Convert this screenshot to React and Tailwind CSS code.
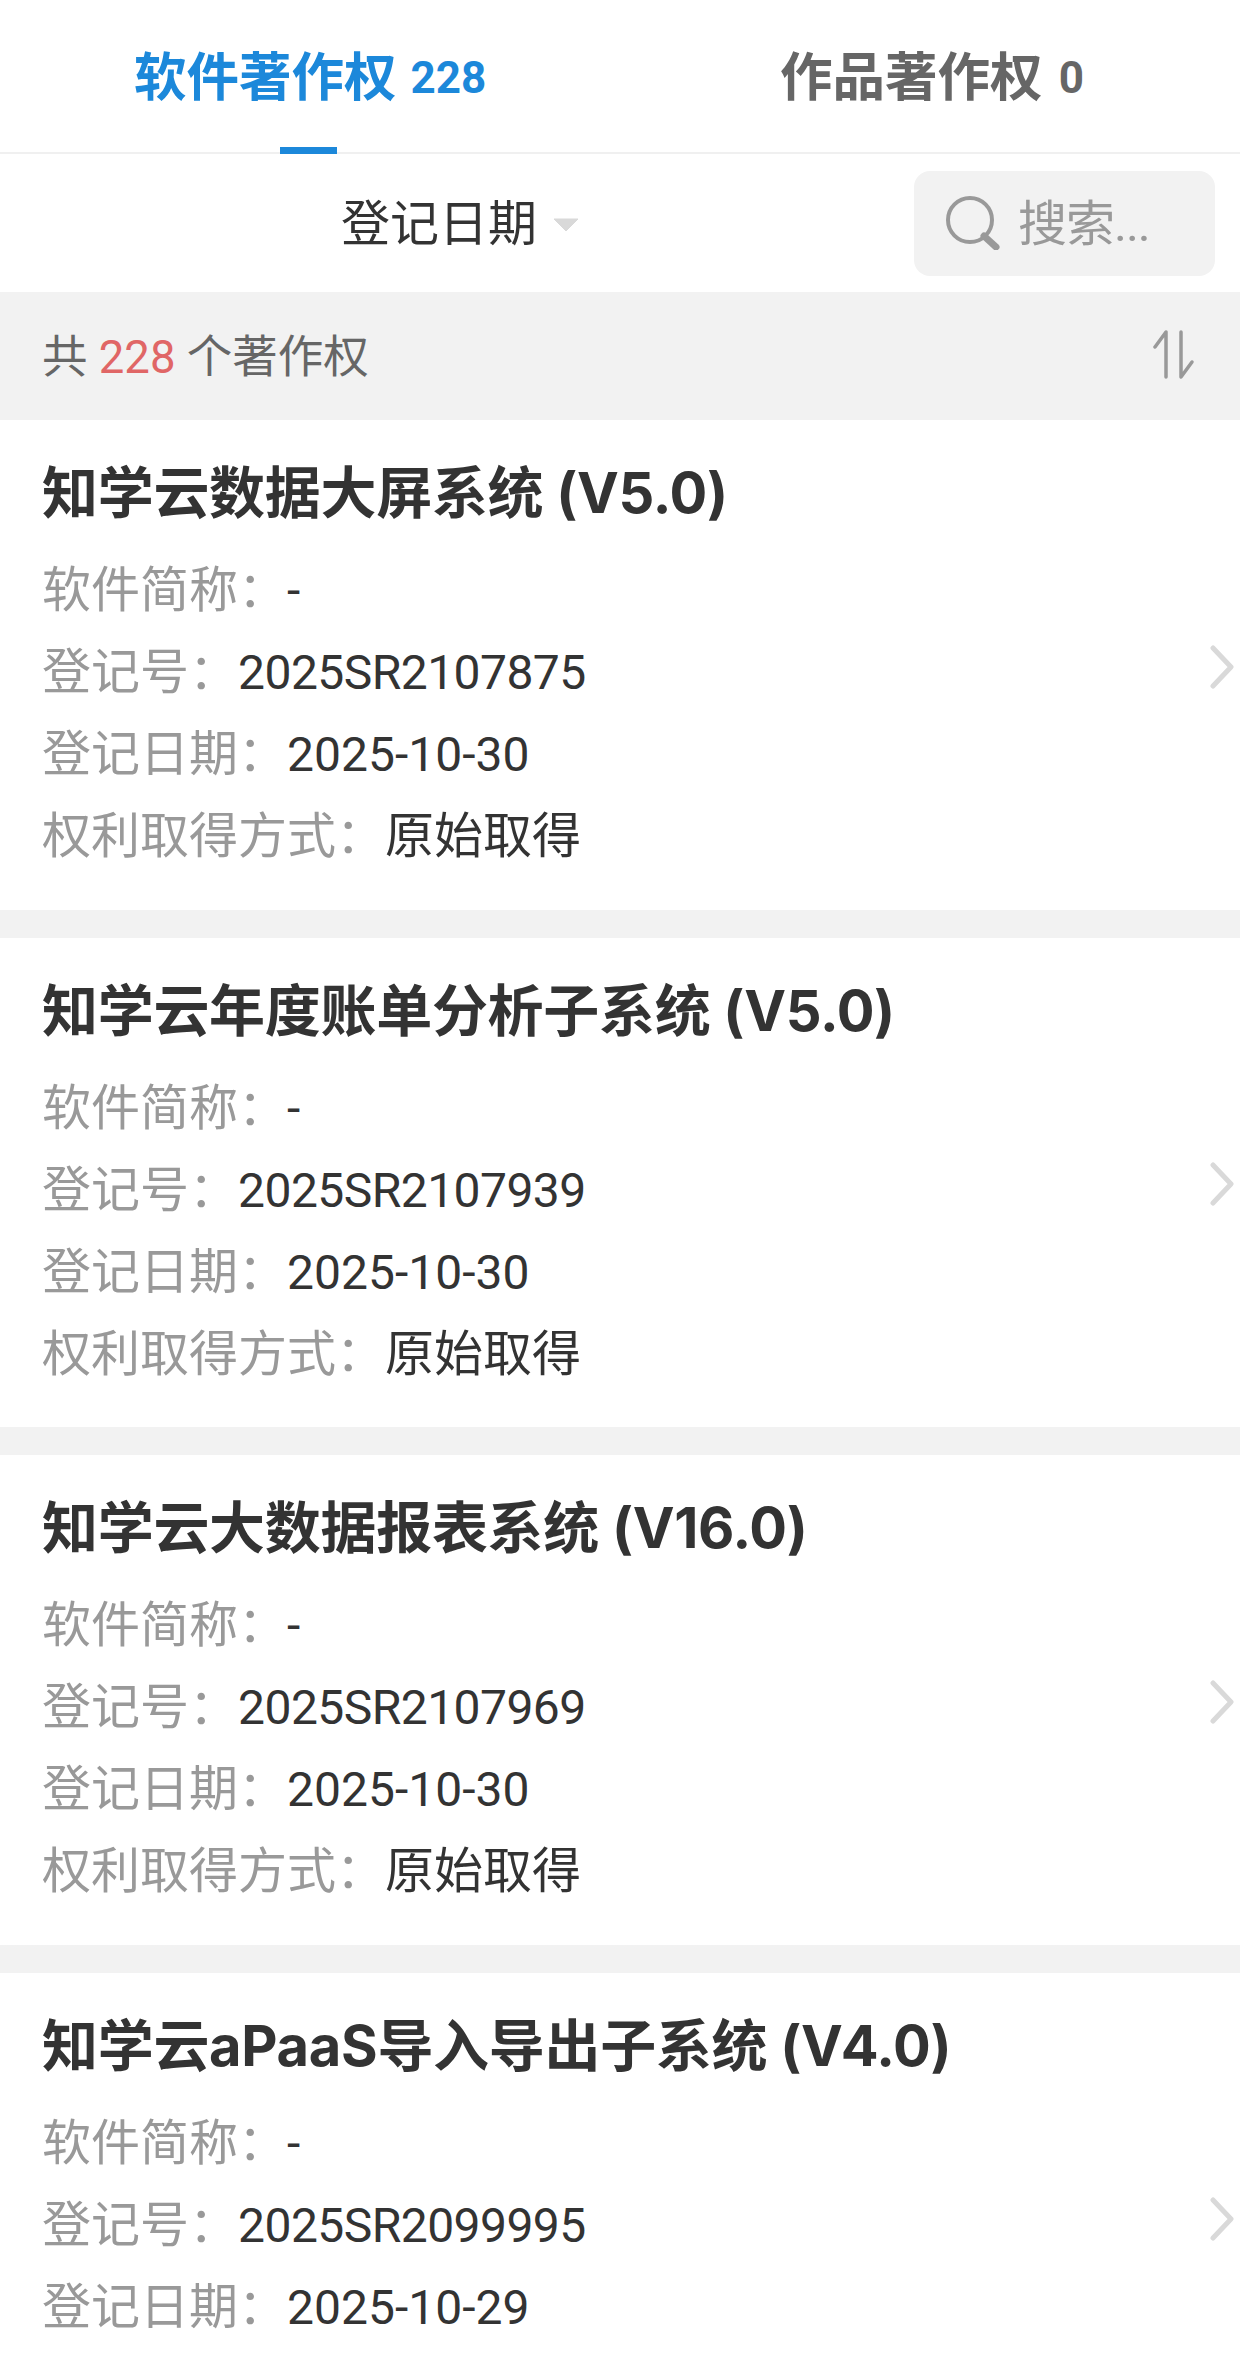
const FONT = "font-['Roboto','Noto_Sans_CJK_SC',sans-serif]";

const cards = [
    { title: "知学云数据大屏系统 (V5.0)", no: "2025SR2107875", date: "2025-10-30", source: "原始取得" },
    { title: "知学云年度账单分析子系统 (V5.0)", no: "2025SR2107939", date: "2025-10-30", source: "原始取得" },
    { title: "知学云大数据报表系统 (V16.0)", no: "2025SR2107969", date: "2025-10-30", source: "原始取得" },
    { title: "知学云aPaaS导入导出子系统 (V4.0)", no: "2025SR2099995", date: "2025-10-29" },
];

const Row = ({ label, children }) => (
    <div className="flex h-[82px] items-center text-[49px] leading-[82px]">
        <span className="text-[#999999]">{label}：</span>
        {children}
    </div>
);

const Card = ({ title, no, date, source }) => (
    <div className="flex h-[489.5px] shrink-0 items-center justify-between bg-white pl-[42px] pr-[6px]">
        <div className="flex h-full flex-col pt-[31px]">
            <h2 className="mb-[15px] h-[84px] font-['Inter','Noto_Sans_CJK_SC',sans-serif] text-[56px] font-bold leading-[84px] tracking-[-0.3px] text-[#333333]">
                {title}
            </h2>
            <Row label="软件简称">
                <span className="text-[48px] text-[#333333]">-</span>
            </Row>
            <Row label="登记号">
                <span className="text-[48px] tracking-[-0.55px] text-[#333333]">{no}</span>
            </Row>
            <Row label="登记日期">
                <span className="text-[48px] text-[#333333]">{date}</span>
            </Row>
            {source && (
                <Row label="权利取得方式">
                    <span className="text-[#333333]">{source}</span>
                </Row>
            )}
        </div>
        <svg width="24" height="44" viewBox="0 0 24 44" fill="none" className="mt-[4px]">
            <path d="M3 3 L21 22 L3 41" stroke="#d9d9d9" strokeWidth="5" strokeLinecap="round" strokeLinejoin="round" />
        </svg>
    </div>
);

const App = () => {
    return (
        <div className={`h-[2373px] w-[1240px] overflow-hidden bg-white ${FONT}`}>
            {/* Tabs */}
            <div className="flex h-[154px] border-b-2 border-[#f0f0f0]">
                <div className="relative flex flex-1 items-center justify-center pl-[2px] pt-[4px] font-bold text-[#1c88da]">
                    <span className="text-[52.5px]">软件著作权</span>
                    <span className="ml-[14px] text-[44px]">228</span>
                    <div className="absolute bottom-[-2px] left-[280px] h-[7px] w-[57px] bg-[#1c88da]" />
                </div>
                <div className="flex flex-1 items-center justify-center pl-[6px] pt-[4px] font-bold text-[#666666]">
                    <span className="text-[52.5px]">作品著作权</span>
                    <span className="ml-[16px] text-[44px]">0</span>
                </div>
            </div>

            {/* Filter */}
            <div className="flex h-[138px] items-center pr-[25px]">
                <div className="flex flex-1 items-center justify-center pl-[6px] pt-[4px]">
                    <span className="text-[49px] text-[#333333]">登记日期</span>
                    <svg width="26" height="14" viewBox="0 0 26 14" className="ml-[16px]">
                        <path d="M1 1 H25 L13 13 Z" fill="#d9d9d9" stroke="#d9d9d9" strokeWidth="1" strokeLinejoin="round" />
                    </svg>
                </div>
                <div className="flex h-[105px] w-[301px] items-center rounded-[16px] bg-[#f2f2f2] pl-[32px]">
                    <svg width="54" height="54" viewBox="0 0 54 54" fill="none">
                        <circle cx="24" cy="24" r="22" stroke="#999999" strokeWidth="4" />
                        <path d="M38 40 L50 51" stroke="#999999" strokeWidth="7" strokeLinecap="round" />
                    </svg>
                    <span className="ml-[18px] pt-[4px] text-[49px] tracking-[-1px] text-[#999999]">搜索...</span>
                </div>
            </div>

            {/* Count */}
            <div className="flex h-[128px] items-center justify-between bg-[#f2f2f2] pl-[42px] pr-[45px] text-[45.5px] text-[#666666]">
                <div className="pt-[4px]">
                    共 <span className="text-[#e06666]">228</span> 个著作权
                </div>
                <svg width="42" height="50" viewBox="0 0 42 50" fill="none" className="mb-[3px]">
                    <path d="M2 17 L13 2 V47" stroke="#999999" strokeWidth="3.5" strokeLinecap="round" strokeLinejoin="round" />
                    <path d="M39 32 L28 47 V2" stroke="#999999" strokeWidth="3.5" strokeLinecap="round" strokeLinejoin="round" />
                </svg>
            </div>

            {/* List */}
            <div className="flex flex-col gap-[28px] bg-[#f2f2f2]">
                {cards.map((c) => (
                    <Card key={c.no} {...c} />
                ))}
            </div>
        </div>
    );
};

export default App;
